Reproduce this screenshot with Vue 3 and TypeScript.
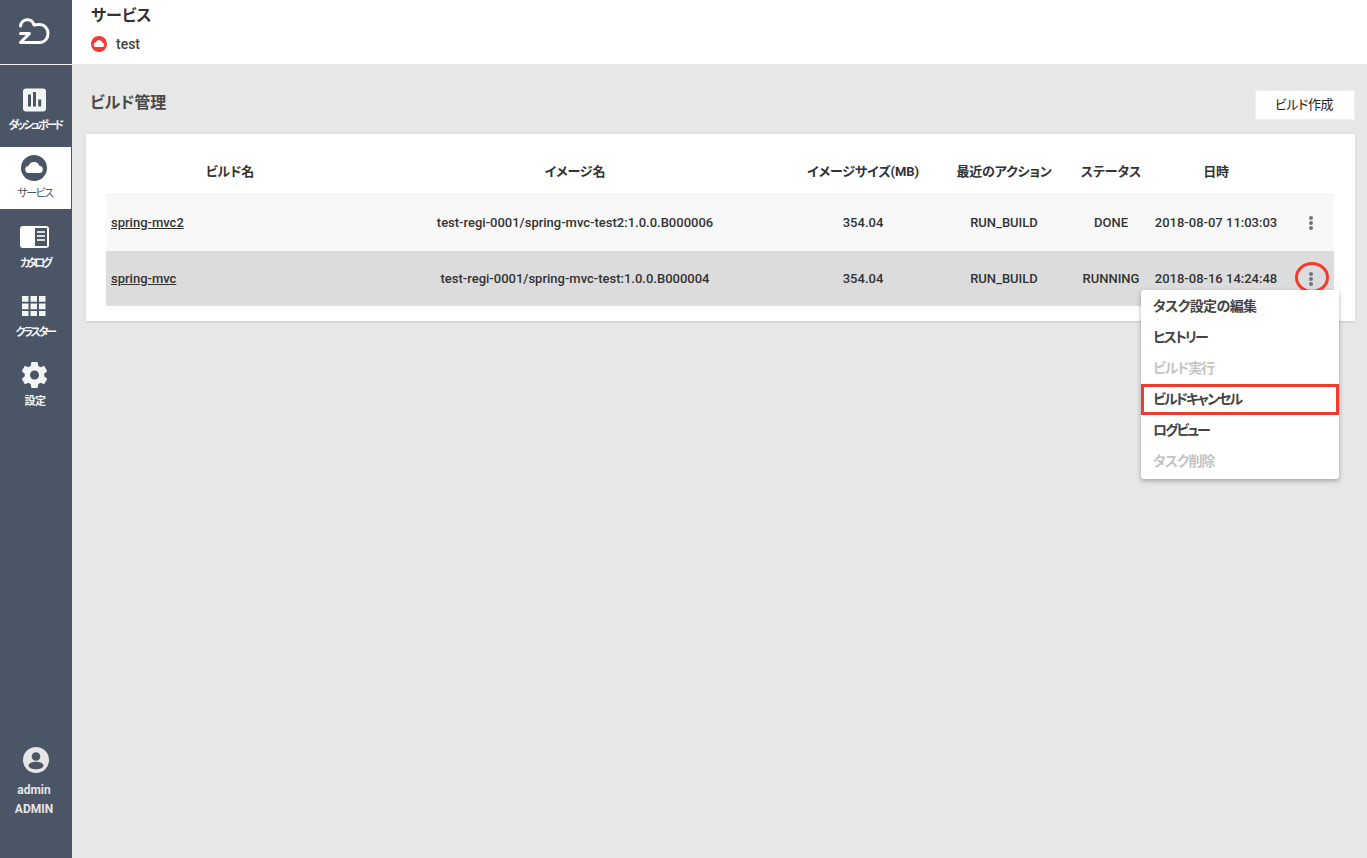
<script setup lang="ts">
interface Row { name: string; image: string; size: string; action: string; status: string; date: string; active: boolean }
const rows: Row[] = [
  { name: 'spring-mvc2', image: 'test-regi-0001/spring-mvc-test2:1.0.0.B000006', size: '354.04', action: 'RUN_BUILD', status: 'DONE', date: '2018-08-07 11:03:03', active: false },
  { name: 'spring-mvc', image: 'test-regi-0001/spring-mvc-test:1.0.0.B000004', size: '354.04', action: 'RUN_BUILD', status: 'RUNNING', date: '2018-08-16 14:24:48', active: true },
]
const heads = ['ビルド名', 'イメージ名', 'イメージサイズ(MB)', '最近のアクション', 'ステータス', '日時', '']
const menu = [
  { label: 'タスク設定の編集', off: false, mark: false, kern: -0.6 },
  { label: 'ヒストリー', off: false, mark: false, kern: -1.8 },
  { label: 'ビルド実行', off: true, mark: false, kern: -1.2 },
  { label: 'ビルドキャンセル', off: false, mark: true, kern: -1.9 },
  { label: 'ログビュー', off: false, mark: false, kern: -2 },
  { label: 'タスク削除', off: true, mark: false, kern: -1 },
]
</script>

<template>
  <div class="app">
    <aside class="side">
      <div class="logo">
        <svg width="32" height="27" viewBox="0 0 32 27" fill="none" stroke="#fff" stroke-width="3" stroke-linejoin="round" stroke-linecap="round">
          <path d="M2.500 8C3 4 6 1.800 9.500 1.800c3 0 5.500 2 6.500 5.200 2-.4 4-.5 6-.4 4.500 0 8 3.900 8 8.900s-3.500 9-8 9"/>
          <path d="M2.500 15.500h9l-9 9H22"/>
        </svg>
      </div>
      <nav class="nav">
        <a class="item">
          <svg width="23" height="23" viewBox="0 0 23 23"><rect width="23" height="23" rx="3" fill="#f3f4f5"/><path d="M5 6h3v12H5zM10 3.500h3V18h-3zM15.200 11h3v7h-3z" fill="#4a5565"/></svg>
          <span class="k-dash">ダッシュボード</span>
        </a>
        <a class="item on">
          <svg width="26" height="26" viewBox="0 0 26 26"><circle cx="13" cy="13" r="13" fill="#4a5565"/><path d="M8 18a3.500 3.500 0 0 1-.5-7 5.800 5.800 0 0 1 11 0 3.500 3.500 0 0 1-.5 7z" fill="#fff"/></svg>
          <span class="k-svc">サービス</span>
        </a>
        <a class="item">
          <svg width="29" height="22" viewBox="0 0 29 22"><rect width="29" height="22" rx="3" fill="#fff"/><rect x="15" y="2" width="12" height="18" fill="#4a5565"/><path d="M17 6h8M17 10h8M17 14h8" stroke="#ddd" stroke-width="2"/></svg>
          <span class="k-cat">カタログ</span>
        </a>
        <a class="item">
          <svg width="24" height="20" viewBox="0 0 24 20" fill="#f3f4f5"><path d="M0 0h6.500v5.800H0zM8.500 0h6.500v5.800H8.500zM17 0h6.500v5.800H17zM0 7.500h6.500v5.800H0zM8.500 7.500h6.500v5.800H8.500zM17 7.500h6.500v5.800H17zM0 15h6.500v5H0zM8.500 15h6.500v5H8.500zM17 15h6.500v5H17z"/></svg>
          <span class="k-clu">クラスター</span>
        </a>
        <a class="item">
          <svg width="27" height="27" viewBox="2 2 20 20"><path fill="#f3f4f5" d="M19.430 12.980c.04-.32.07-.64.07-.98s-.03-.66-.07-.98l2.110-1.650c.19-.15.240-.42.120-.64l-2-3.460c-.12-.22-.39-.3-.61-.22l-2.490 1c-.52-.4-1.080-.73-1.690-.98l-.38-2.650C14.460 2.180 14.250 2 14 2h-4c-.25 0-.46.180-.49.420l-.38 2.650c-.61.25-1.170.59-1.690.98l-2.490-1c-.23-.09-.49 0-.61.220l-2 3.460c-.13.220-.07.490.12.640l2.110 1.650c-.04.320-.07.650-.07.980s.03.660.07.980l-2.110 1.650c-.19.150-.240.420-.12.640l2 3.460c.12.220.39.300.61.220l2.490-1c.52.400 1.080.730 1.690.980l.38 2.650c.03.240.24.420.49.420h4c.25 0 .46-.18.49-.42l.38-2.650c.61-.25 1.170-.59 1.690-.98l2.490 1c.23.090.49 0 .61-.22l2-3.460c.12-.22.07-.49-.12-.64l-2.110-1.650zM12 15.500c-1.930 0-3.500-1.570-3.500-3.500s1.570-3.500 3.500-3.500 3.500 1.570 3.500 3.500-1.570 3.500-3.500 3.500z"/></svg>
          <span>設定</span>
        </a>
      </nav>
      <div class="user">
        <svg width="26" height="26" viewBox="0 0 26 26"><circle cx="13" cy="13" r="13" fill="#e6e6e6"/><circle cx="13" cy="9.500" r="4.300" fill="#4a5565"/><ellipse cx="13" cy="18.500" rx="7.500" ry="3.800" fill="#4a5565"/></svg>
        <div class="uname">admin</div>
        <div class="uname">ADMIN</div>
      </div>
    </aside>
    <div class="main">
      <header class="top">
        <h1>サービス</h1>
        <div class="svc">
          <svg width="16" height="16" viewBox="0 0 16 16"><circle cx="8" cy="8" r="8" fill="#f13a30"/><path d="M5 11a2.200 2.200 0 0 1-.3-4.400 3.400 3.400 0 0 1 6.600 0A2.200 2.200 0 0 1 11 11z" fill="#fff"/></svg>
          <span>test</span>
        </div>
      </header>
      <section class="content">
        <div class="titlebar">
          <h2>ビルド管理</h2>
          <button class="create">ビルド作成</button>
        </div>
        <div class="card">
          <div class="grid head">
            <div v-for="h in heads" :key="h" class="cell">{{ h }}</div>
          </div>
          <div v-for="r in rows" :key="r.name" class="grid row" :class="{ active: r.active }">
            <div class="cell left"><a class="link">{{ r.name }}</a></div>
            <div class="cell">{{ r.image }}</div>
            <div class="cell">{{ r.size }}</div>
            <div class="cell">{{ r.action }}</div>
            <div class="cell">{{ r.status }}</div>
            <div class="cell">{{ r.date }}</div>
            <div class="cell">
              <span class="kebab"><i></i><i></i><i></i></span>
              <span v-if="r.active" class="ring"></span>
              <ul v-if="r.active" class="menu">
                <li v-for="m in menu" :key="m.label" :class="{ off: m.off, mark: m.mark }" :style="{ letterSpacing: m.kern + 'px' }">{{ m.label }}</li>
              </ul>
            </div>
          </div>
        </div>
      </section>
    </div>
  </div>
</template>

<style>
html, body { margin: 0; padding: 0; }
</style>

<style scoped>
.app {
  display: flex;
  height: 858px;
  font-family: Roboto, "Noto Sans CJK JP", sans-serif;
  font-feature-settings: "palt";
  color: #333;
  background: #e7e7e7;
  overflow: hidden;
}
.side {
  width: 72px;
  flex: none;
  background: #4a5565;
  display: flex;
  flex-direction: column;
  color: #fff;
}
.logo {
  height: 65px;
  border-bottom: 1px solid #f0f0f0;
  display: flex;
  align-items: center;
  justify-content: center;
  padding: 0 5px 2px 0;
  box-sizing: border-box;
}
.nav { padding-top: 13px; flex: 1; }
.item {
  height: 69px;
  box-sizing: border-box;
  padding: 9px 2px 0 0;
  display: flex;
  flex-direction: column;
  align-items: center;
  font-size: 11px;
  font-weight: 700;
  line-height: 14px;
  color: #f3f4f5;
}
.item svg { height: 26px; margin: 0 2px 7px 0; flex: none; }
.item:first-child svg { margin-bottom: 6px; }
.item span { letter-spacing: -0.6px; white-space: nowrap; }
.item span.k-dash { letter-spacing: -2.5px; }
.item span.k-svc { letter-spacing: -1.6px; }
.item span.k-cat { letter-spacing: -3px; }
.item span.k-clu { letter-spacing: -2.4px; }
.item.on {
  background: #fff;
  color: #4a5565;
  width: 71px;
  height: 62px;
  margin: 0 0 6px;
  padding: 8px 1px 0 0;
  font-weight: 400;
}
.item.on svg { margin-bottom: 6px; }
.user {
  height: 98px;
  margin-bottom: 13px;
  display: flex;
  flex-direction: column;
  align-items: center;
  color: #e6e6e6;
  font-size: 12px;
  font-weight: 700;
  line-height: 19px;
}
.user svg { margin-bottom: 8px; }
.uname { margin-right: 4px; }
.main { flex: 1; display: flex; flex-direction: column; min-width: 0; }
.top {
  height: 64px;
  background: #fff;
  padding: 6px 19px 0;
  box-sizing: border-box;
}
h1 {
  margin: 0;
  font-size: 16px;
  line-height: 20px;
  font-weight: 700;
  color: #333;
}
.svc {
  display: flex;
  align-items: center;
  gap: 9px;
  margin-top: 9px;
  font-size: 14px;
  line-height: 18px;
  font-weight: 500;
  color: #444;
}
.content { padding: 26px 12px 0 14px; }
.titlebar {
  display: flex;
  justify-content: space-between;
  align-items: center;
  height: 30px;
  margin-bottom: 14px;
  padding-left: 4px;
}
h2 {
  margin: 0 0 9px;
  font-size: 16px;
  font-weight: 700;
  color: #4a4a4a;
}
.create {
  width: 100px;
  height: 30px;
  border: 1px solid #efefef;
  background: #fff;
  font: inherit;
  font-size: 13px;
  letter-spacing: -0.4px;
  color: #222;
  padding: 0 2px 4px 0;
}
.card {
  background: #fff;
  padding: 0 21px 15px 20px;
  box-shadow: 0 1px 3px rgba(0, 0, 0, .12);
}
.grid {
  display: grid;
  grid-template-columns: 248px 442px 134px 148px 66px 144px 46px;
  font-size: 13px;
  color: #333;
}
.head {
  height: 61px;
  padding-top: 13px;
  box-sizing: border-box;
  font-weight: 700;
  letter-spacing: -0.15px;
  border-bottom: 1px solid #eee;
}
.row { height: 56px; padding-bottom: 2px; box-sizing: border-box; background: #f8f8f8; font-weight: 500; }
.row.active { height: 55px; padding-bottom: 0; background: #dcdcdc; }
.row:not(.active) .kebab { margin-top: 2px; }
.cell {
  display: flex;
  align-items: center;
  justify-content: center;
  white-space: nowrap;
  position: relative;
}
.cell.left { justify-content: flex-start; padding-left: 5px; }
.link { text-decoration: underline; }
.kebab {
  display: flex;
  flex-direction: column;
  align-items: center;
  gap: 1px;
}
.kebab i { width: 4px; height: 4px; border-radius: 50%; background: #6b7480; }
.ring {
  position: absolute;
  left: 7px;
  top: 11px;
  width: 34px;
  height: 31px;
  box-sizing: border-box;
  border: 3px solid #f23b2c;
  border-radius: 50%;
}
.menu {
  position: absolute;
  top: 39px;
  right: -5px;
  width: 198px;
  margin: 0;
  padding: 1px 0 2px;
  list-style: none;
  background: #fff;
  border-radius: 3px;
  box-shadow: 0 2px 5px rgba(0, 0, 0, .3);
  z-index: 2;
  font-size: 14px;
  font-weight: 700;
  color: #444;
  box-sizing: border-box;
}
.menu li {
  height: 31px;
  line-height: 30px;
  padding-left: 12px;
  box-sizing: border-box;
}
.menu li.off { color: #c4c4c4; }
.menu li.mark { border: 3px solid #f23b2c; line-height: 24px; padding-left: 9px; }
</style>
